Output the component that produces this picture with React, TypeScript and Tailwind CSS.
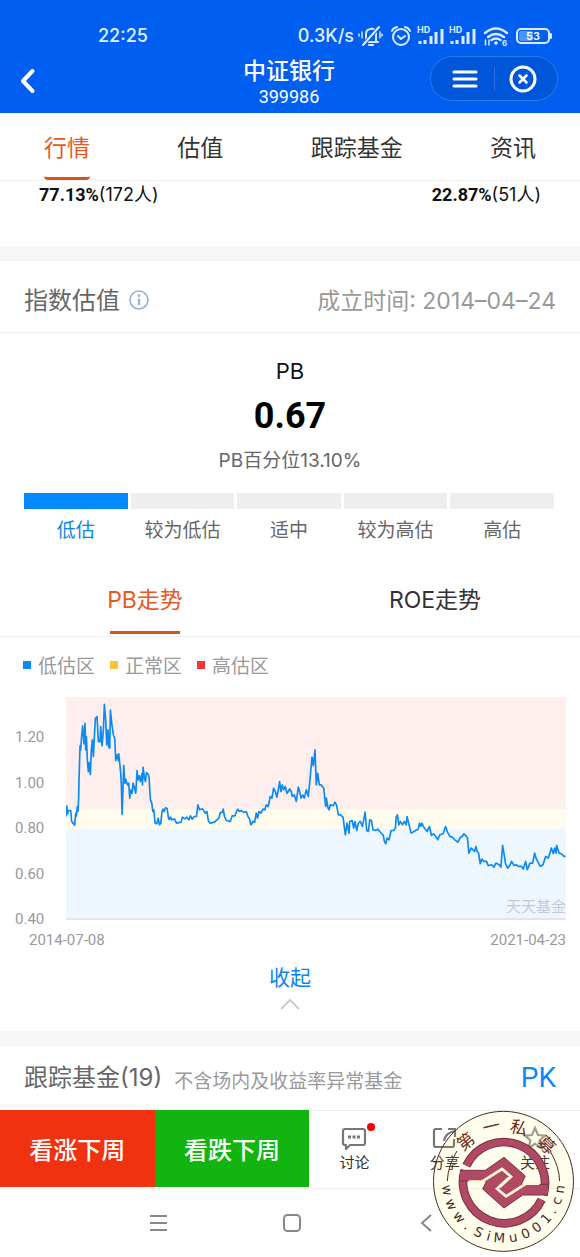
import React from "react";

const LINE =
  "200,530 202,498 205,522 208,512 214,512 217,545 221,550 226,556 229,520 231,528 234,500 236,514 238,470 239,420 242,318 244,330 246,300 250,258 254,312 257,250 259,330 261,290 264,360 267,395 270,368 273,404 276,330 279,300 282,350 285,290 288,235 293,230 297,305 302,305 304,260 308,318 312,270 315,193 319,240 322,315 326,270 328,322 331,325 333,210 337,250 342,285 346,295 349,362 353,345 357,362 358,342 361,370 364,400 366,440 368,524 370,470 373,376 376,430 379,418 384,435 388,430 391,475 395,450 398,460 401,430 404,440 409,460 413,392 416,420 420,408 423,425 428,400 429,435 431,382 435,415 438,425 441,398 447,405 449,415 451,450 453,480 457,490 460,515 463,510 467,550 472,552 476,535 480,555 484,550 487,520 490,508 494,515 498,504 503,506 507,535 510,540 513,532 517,540 525,537 531,550 545,547 549,532 556,537 562,532 568,540 573,528 578,538 584,530 591,530 595,495 600,510 609,507 617,520 622,515 627,545 632,550 645,547 652,540 658,535 662,518 668,518 671,508 675,530 680,542 692,545 698,528 706,528 711,515 715,508 720,515 726,512 732,518 740,515 745,530 749,535 754,555 760,545 765,548 770,520 774,535 778,515 784,520 790,508 796,510 800,495 806,500 812,470 817,475 822,445 827,455 832,472 836,450 840,425 844,455 848,435 852,450 857,440 862,460 866,455 " +
  "870,447 875,455 878,470 884,465 890,485 896,442 900,455 904,475 910,465 914,475 920,450 926,470 930,430 934,385 937,352 941,377 946,330 950,435 954,400 959,435 964,435 972,445 978,500 980,475 985,505 988,510 992,495 1000,498 1006,487 1011,497 1016,525 1022,525 1030,532 1033,555 1037,585 1042,550 1048,580 1050,545 1057,542 1062,565 1066,545 1071,572 1076,550 1082,545 1088,560 1092,540 1096,517 1101,572 1106,575 1110,540 1115,542 1120,570 1128,572 1134,568 1140,575 1146,582 1150,585 1154,605 1158,612 1162,595 1168,600 1174,572 1182,572 1187,565 1189,532 1193,525 1197,555 1202,545 1208,555 1214,545 1219,555 1222,530 1227,552 1234,580 1240,577 1247,572 1255,568 1259,550 1263,560 1266,550 1272,562 1282,575 1289,560 1295,587 1301,582 1308,590 1314,600 1320,585 1330,582 1337,560 1343,577 1350,590 1357,592 1365,600 1374,607 1382,592 1387,590 1392,582 1400,590 1403,595 1407,640 1414,625 1424,635 1428,620 1432,635 1436,640 1441,672 1446,658 1452,665 1460,665 1465,678 1475,675 1482,682 1488,670 1498,675 1503,682 1508,617 1512,640 1517,672 1523,685 1530,677 1535,665 1542,677 1548,675 1555,680 1565,680 1570,688 1577,665 1582,690 1590,670 1598,670 1604,640 1608,655 1613,665 1621,680 1629,675 1637,650 1645,655 1650,640 1654,625 1660,642 1664,625 1668,640 1670,617 1677,640 1684,642 1692,650 1697,650";

function StatusIcons() {
  return (
    <svg width="196" height="28" viewBox="358 21 196 28" fill="none" stroke="#dcebff" strokeWidth="2" strokeLinecap="round" strokeLinejoin="round" aria-hidden="true">
      <path d="M364 41h14M366 40v-7c0-3 2-5 5-5 1-1 1-1 2 0 2 0 3 2 3 5v7M369 44h4" />
      <path d="M363 44 379 26" stroke="#005ef0" strokeWidth="4" />
      <path d="M363 44 379 26" />
      <path d="M362 31v6M359 33v2M380 31v6M382 33v2" strokeWidth="1.4" />
      <circle cx="401" cy="36" r="8" />
      <path d="M392 30q1-3 5-4M410 30q-1-3-5-4M398 35l3 3 4-3" />
      {[418, 450].map((x) => (
        <g key={x}>
          <text x={x - 1} y="32" fill="#dcebff" stroke="none" fontSize="9" fontWeight="700" fontFamily="Inter, sans-serif">HD</text>
          <path
            d={`M${x + 2} 43v-3M${x + 7} 43v-4M${x + 13} 43v-8M${x + 18} 43v-12M${x + 24} 43v-15`}
            strokeWidth="3"
            strokeLinecap="butt"
          />
        </g>
      ))}
      <path d="M485 32q11-9 22 0M488 36q8-6 16 0M491.500 39q4.500-3 9 0" strokeWidth="2.400" />
      <circle cx="496" cy="42" r="1.800" fill="#dcebff" stroke="none" />
      <path d="M485.500 39v5M489 44v-5" strokeWidth="1.500" />
      <text x="502" y="45" fill="#dcebff" stroke="none" fontSize="8" fontWeight="700" fontFamily="Inter, sans-serif">6</text>
      <rect x="517" y="28" width="32" height="14" rx="4" strokeWidth="2" />
      <rect x="519" y="30" width="14" height="10" rx="2" fill="#4d96ff" stroke="none" />
      <path d="M551 33v4" />
      <text x="533" y="39" textAnchor="middle" fill="#fff" stroke="none" fontSize="11" fontWeight="600" fontFamily="Inter, sans-serif">53</text>
    </svg>
  );
}

function Header() {
  return (
    <header className="bg-[#005ef0] text-white">
      <div className="flex h-14 items-end justify-between pr-[26px] pb-1.5 pl-[98px] text-[#e4efff]">
        <time className="text-[18px] leading-7 font-medium">22:25</time>
        <div className="flex items-center gap-1">
          <span className="text-[18px] leading-7 font-medium">0.3K/s</span>
          <StatusIcons />
        </div>
      </div>
      <div className="grid h-[57px] grid-cols-[1fr_auto_1fr] items-start pr-[22px] pl-5">
        <button aria-label="返回" className="mt-2.5 w-4">
          <svg width="16" height="30" viewBox="0 0 16 30" fill="none" stroke="#fff" strokeWidth="4" strokeLinecap="round" strokeLinejoin="round">
            <path d="M12.500 5 3 15l9.500 10" />
          </svg>
        </button>
        <div className="text-center">
          <h1 className="text-[23px] leading-[30px] font-medium">中证银行</h1>
          <p className="font-['Roboto',sans-serif] text-[18px] leading-[22px]">399986</p>
        </div>
        <div className="flex h-[45px] w-[128px] items-center justify-self-end rounded-full border border-[#2b79ea] bg-[#0056d9]">
          <button aria-label="菜单" className="flex flex-1 justify-center pl-1.5">
            <svg width="26" height="20" viewBox="0 0 26 20" stroke="#fff" strokeWidth="3" strokeLinecap="round">
              <path d="M2 3h22M2 10h22M2 17h22" />
            </svg>
          </button>
          <span className="h-6 w-px bg-[#2b6fe0]" />
          <button aria-label="关闭" className="flex flex-1 justify-center pr-1.5">
            <svg width="28" height="28" viewBox="0 0 28 28" fill="none" stroke="#fff" strokeWidth="3" strokeLinecap="round">
              <circle cx="14" cy="14" r="12" />
              <path d="m10.500 10.500 7 7M17.500 10.500l-7 7" strokeWidth="2.500" />
            </svg>
          </button>
        </div>
      </div>
    </header>
  );
}

function Tabs() {
  return (
    <nav className="flex h-[68px] justify-between border-b border-[#f0f0f0] px-11 text-[23px] text-[#333]">
      {["行情", "估值", "跟踪基金", "资讯"].map((t, i) => (
        <a
          key={t}
          href="#"
          className={
            i === 0
              ? "flex h-[67px] items-center rounded-sm border-b-[3px] border-[#d9531e] pt-1.5 text-[#e8591f]"
              : "flex h-[67px] items-center border-b-[3px] border-transparent pt-1.5"
          }
        >
          {t}
        </a>
      ))}
    </nav>
  );
}

const LEVELS = ["低估", "较为低估", "适中", "较为高估", "高估"];

function Valuation() {
  return (
    <section>
      <div className="flex h-[72px] items-center justify-between border-b border-[#f0f0f0] pt-2 pr-6 pl-6">
        <h2 className="flex items-center gap-2 text-[24px] leading-8 text-[#666]">
          指数估值
          <svg width="22" height="22" viewBox="0 0 22 22" fill="none" stroke="#8fb3de" strokeWidth="1.600" aria-hidden="true">
            <circle cx="11" cy="10" r="9" />
            <path d="M11 8.500V15" strokeWidth="2.200" />
            <circle cx="11" cy="5.700" r="1.400" fill="#8fb3de" stroke="none" />
          </svg>
        </h2>
        <p className="text-[23px] leading-8 text-[#999]">成立时间: 2014–04–24</p>
      </div>
      <div className="flex flex-col items-center pt-5">
        <p className="text-[22px] leading-9 text-[#111]">PB</p>
        <p className="font-['Roboto',sans-serif] text-[36px] leading-[54px] font-bold text-black">0.67</p>
        <p className="text-[19px] leading-9 text-[#666]">PB百分位13.10%</p>
      </div>
      <ol className="mt-3.5 grid grid-cols-5 gap-[3px] pr-[26px] pl-6 text-center text-[19px] text-[#666]">
        {LEVELS.map((l, i) => (
          <li key={l} className={i === 0 ? "text-[#0b85ea]" : ""}>
            <div className={i === 0 ? "h-4 bg-[#018aff]" : "h-4 bg-[#eee]"} />
            <span className="block pt-1 leading-9">{l}</span>
          </li>
        ))}
      </ol>
    </section>
  );
}

function Trend() {
  return (
    <section>
      <div className="mt-4 grid h-[72px] grid-cols-2 border-b border-[#f0f0f0] text-[23px] text-[#333]">
        <button className="relative text-[#e8591f]">
          PB走势
          <span className="absolute bottom-0.5 left-1/2 h-[3px] w-[70px] -translate-x-1/2 bg-[#d9531e]" />
        </button>
        <button>ROE走势</button>
      </div>
      <ul className="flex h-[60px] items-center gap-[15px] pl-[23px] text-[19px] text-[#999]">
        <li className="flex items-center gap-[7px]"><span className="mb-1 size-2 bg-[#0b8af5]" />低估区</li>
        <li className="flex items-center gap-[7px]"><span className="mb-1 size-2 bg-[#fdc135]" />正常区</li>
        <li className="flex items-center gap-[7px]"><span className="mb-1 size-2 bg-[#f93535]" />高估区</li>
      </ul>
      <div className="flex pr-3.5 font-['Roboto',sans-serif] text-[15px] leading-4 text-[#999]">
        <div className="mt-8 -mb-2 flex h-[198px] w-[66px] flex-col justify-between pl-[15px]">
          {["1.20", "1.00", "0.80", "0.60", "0.40"].map((v) => (
            <span key={v}>{v}</span>
          ))}
        </div>
        <div className="relative h-[223px] flex-1 border-b-2 border-[#dfe4ee]">
          <svg className="block size-full" viewBox="200 171 1498 664" preserveAspectRatio="none" role="img" aria-label="PB走势">
            <rect x="200" y="171" width="1498" height="338" fill="#ffeeee" />
            <rect x="200" y="509" width="1498" height="58" fill="#fffcee" />
            <rect x="200" y="567" width="1498" height="270" fill="#eef7ff" />
            <polyline points={LINE} fill="none" stroke="#0b8af0" strokeWidth="5" strokeLinejoin="round" />
          </svg>
          <span className="absolute right-0 bottom-1 font-['Noto_Sans_CJK_SC',sans-serif] text-[15px] leading-4 text-[#c4c9d6]">天天基金</span>
        </div>
      </div>
      <div className="flex justify-between pt-3 pr-3.5 pl-[29px] font-['Roboto',sans-serif] text-[15px] leading-4 text-[#999]">
        <span>2014-07-08</span>
        <span>2021-04-23</span>
      </div>
      <button className="mx-auto mt-3 flex h-[71px] flex-col items-center pt-0.5 text-[21px] leading-8 text-[#0b85ea]">
        收起
        <svg className="mt-1" width="22" height="14" viewBox="0 0 22 14" fill="none" stroke="#ccc" strokeWidth="2">
          <path d="m2 11 9-9 9 9" />
        </svg>
      </button>
    </section>
  );
}

function Funds() {
  return (
    <section className="flex h-16 items-center justify-between px-6">
      <h2 className="flex items-end gap-3 text-[24px] leading-8 text-[#666]">
        跟踪基金(19)
        <small className="text-[19px] leading-6 text-[#999]">不含场内及收益率异常基金</small>
      </h2>
      <button className="font-['Roboto',sans-serif] text-[28px] leading-8 text-[#0b8af5]">PK</button>
    </section>
  );
}

function Actions() {
  return (
    <div className="grid h-[79px] grid-cols-[12fr_12fr_7fr_7fr_7fr] border-b border-[#eee] text-[15px] leading-5 text-[#333]">
      <button className="mb-px bg-[#f03210] pt-1 text-[24px] font-medium text-white">看涨下周</button>
      <button className="mb-px bg-[#12b510] pt-1 text-[24px] font-medium text-white">看跌下周</button>
      <button className="flex flex-col items-center gap-0.5 border-t border-[#eee] pt-3.5">
        <span className="relative">
          <svg width="26" height="26" viewBox="0 0 26 26" fill="none" stroke="#777" strokeWidth="2.200" strokeLinejoin="round">
            <path d="M4 4h18q2 0 2 2v12q0 2-2 2H9l-4 4v-4H4q-2 0-2-2V6q0-2 2-2Z" />
            <path d="M7 12h3M11.500 12h3M16 12h3" strokeWidth="3" />
          </svg>
          <i className="absolute -top-0.5 -right-2 size-2 rounded-full bg-[#f00000]" />
        </span>
        讨论
      </button>
      <button className="flex flex-col items-center gap-0.5 border-t border-[#eee] pt-3.5">
        <svg width="26" height="26" viewBox="0 0 26 26" fill="none" stroke="#777" strokeWidth="2.200">
          <path d="M10 4H4q-2 0-2 2v14q0 2 2 2h16q2 0 2-2v-6M12 16q1-8 11-10M16 4h7v8" />
        </svg>
        分享
      </button>
      <button className="flex flex-col items-center gap-0.5 border-t border-[#eee] pt-3.5">
        <svg width="26" height="26" viewBox="0 0 26 26" fill="none" stroke="#999" strokeWidth="2.200">
          <path d="m13 3 3 7 7 .6-5.400 4.800L19.500 23 13 18.800 6.500 23l1.900-7.600L3 10.600 10 10Z" />
        </svg>
        关注
      </button>
    </div>
  );
}

function SystemNav() {
  return (
    <div className="flex h-[68px] items-center justify-center pl-[3px]">
      <button aria-label="最近任务" className="flex w-[134px] justify-center">
        <svg width="20" height="20" viewBox="0 0 20 20" stroke="#888" strokeWidth="2"><path d="M2 3h17M2 10h17M2 17h17" /></svg>
      </button>
      <button aria-label="主页" className="flex w-[134px] justify-center">
        <svg width="20" height="20" viewBox="0 0 20 20" fill="none" stroke="#888" strokeWidth="2"><rect x="2" y="2" width="16" height="16" rx="3.500" /></svg>
      </button>
      <button aria-label="后退" className="flex w-[134px] justify-center">
        <svg width="20" height="20" viewBox="0 0 20 20" fill="none" stroke="#888" strokeWidth="2"><path d="m15 2-9 8 9 8" /></svg>
      </button>
    </div>
  );
}

const SEAL_URL: [string, number][] = [
  ["w", 171], ["w", 156], ["w", 141], [".", 129], ["S", 116], ["i", 105], ["M", 94],
  ["u", 80], ["0", 67], ["0", 54], ["1", 41], [".", 31], ["c", 20], ["n", 8],
];

function Seal() {
  const upper = "M139 197A124 124 0 0 1 370 285";
  const lower = "M365 299A124 124 0 0 1 134 211";
  return (
    <svg className="pointer-events-none absolute right-[5px] bottom-1" width="143" height="143" viewBox="36 30 429 429" role="img" aria-label="第一私募 www.SiMu001.cn">
      <circle cx="250.500" cy="244" r="210" fill="#ffee00" fillOpacity=".07" stroke="#4a2a20" strokeWidth="3" />
      <path d="M82 243Q84 196 111 153M419 243Q417 196 390 153" fill="none" stroke="#4a2a20" strokeWidth="3" />
      <g fill="none">
        <path d={upper} stroke="#7a3048" strokeWidth="26" />
        <path d={lower} stroke="#7a3048" strokeWidth="26" />
        <path d={upper} stroke="#b04a62" strokeWidth="20" />
        <path d={lower} stroke="#b04a62" strokeWidth="20" />
      </g>
      <g fill="#b04a62" stroke="#7a3048" strokeWidth="3" strokeLinejoin="round">
        <path d="M122 211H196L252 172 316 228 304 253H382V285H308L252 324 188 267 200 243H122Z" />
      </g>
      <path d="M128 215V240M376 256V281" stroke="#b04a62" strokeWidth="16" />
      <g fill="none" stroke="#fff8dc" strokeWidth="8">
        <path d="M146 245H186L246 207 273 230 238 262" />
        <path d="M358 251H318L258 289 231 266 266 234" />
      </g>
      <g fill="#6b2d20" fontFamily="'Noto Sans CJK SC', sans-serif" fontSize="52" textAnchor="middle">
        <text transform="translate(137 124) rotate(-38)" y="19">第</text>
        <text transform="translate(214 79) rotate(-13)" y="19">一</text>
        <text transform="translate(297 83) rotate(14)" y="19">私</text>
        <text transform="translate(380 135) rotate(44)" y="19">募</text>
      </g>
      <g fill="#4a2a20" fontFamily="'DejaVu Sans', sans-serif" fontSize="40" textAnchor="middle">
        {SEAL_URL.map(([c, a], i) => (
          <text key={i} transform={`translate(250 244) rotate(${a - 90})`} y="184">{c}</text>
        ))}
      </g>
    </svg>
  );
}

export default function App() {
  return (
    <div className="relative min-h-screen bg-white font-['Inter','Noto_Sans_CJK_SC',sans-serif]">
      <Header />
      <Tabs />
      <div className="flex h-[65px] justify-between px-[39px] text-[18px] leading-7 text-[#111]">
        <p><b className="font-['Roboto',sans-serif]">77.13%</b>(172人)</p>
        <p><b className="font-['Roboto',sans-serif]">22.87%</b>(51人)</p>
      </div>
      <div className="h-[15px] bg-[#f6f6f6]" />
      <Valuation />
      <Trend />
      <div className="h-[15px] bg-[#f6f6f6]" />
      <Funds />
      <Actions />
      <SystemNav />
      <Seal />
    </div>
  );
}
